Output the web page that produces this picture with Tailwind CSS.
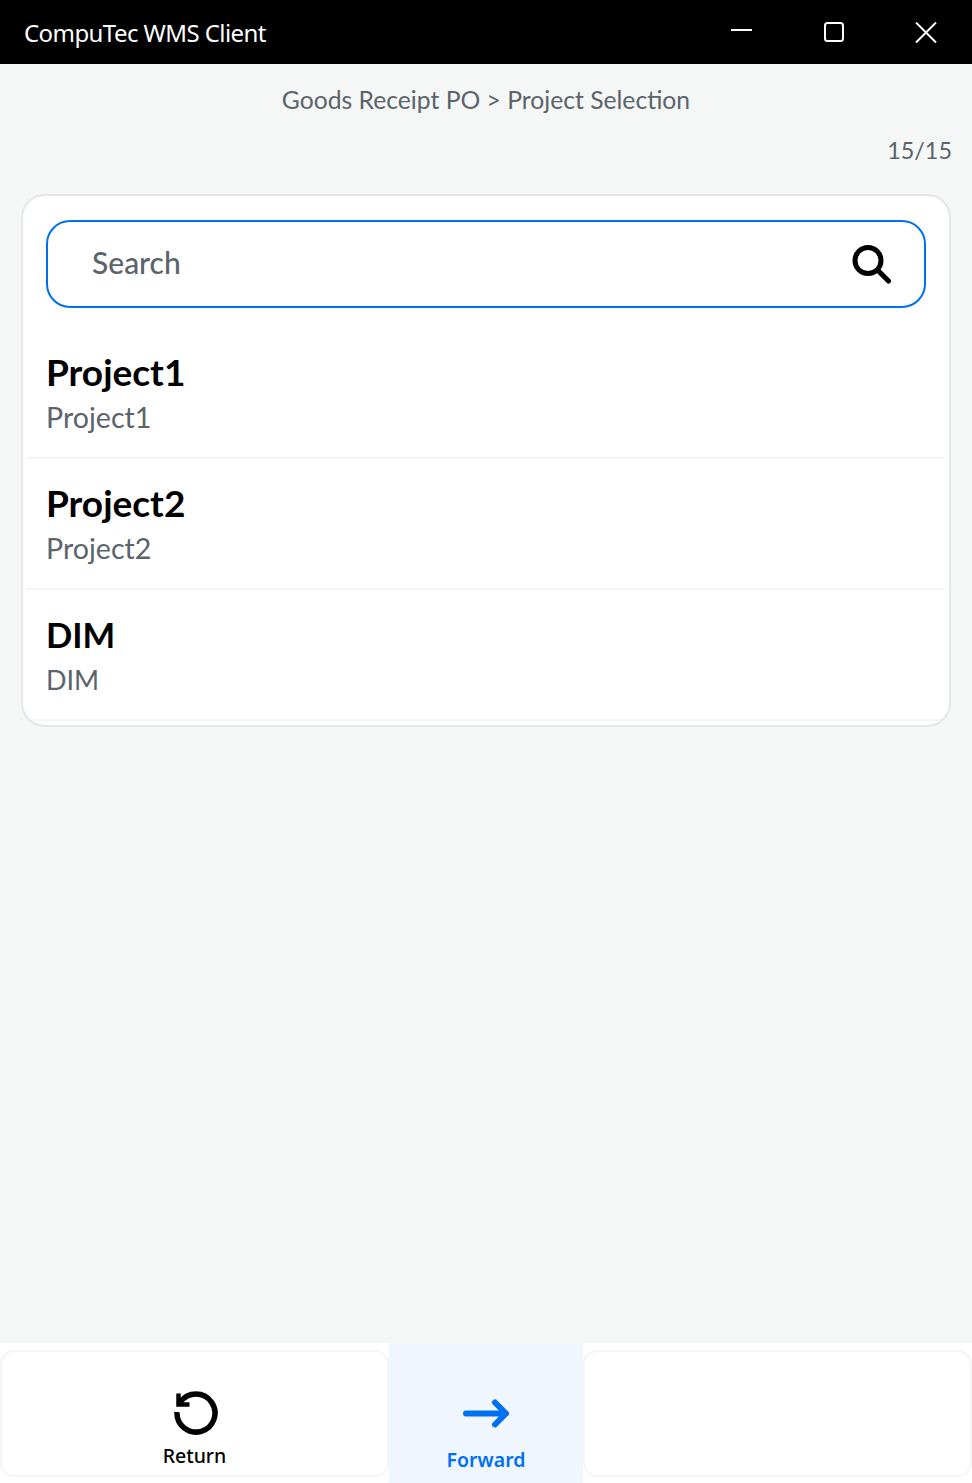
<!DOCTYPE html>
<html>
<head>
<meta charset="utf-8">
<script src="https://cdn.jsdelivr.net/npm/@tailwindcss/browser@4"></script>
</head>
<body class="m-0 bg-[#f5f7f7] font-['Lato','Noto_Sans',sans-serif]">
<div class="flex flex-col h-[1483px] w-[972px] overflow-hidden">
  <header class="h-16 shrink-0 bg-black text-white flex items-center pl-6">
    <span class="flex-1 text-[24px] leading-[68px] pt-[1px] font-['Noto_Sans',sans-serif] tracking-[-0.57px]">CompuTec WMS Client</span>
    <div class="w-[92px] h-16 flex items-center justify-center pb-[2px]"><svg width="22" height="22" viewBox="0 0 22 22"><path d="M0 10h21" stroke="#fff" stroke-width="2"/></svg></div>
    <div class="w-[92px] h-16 flex items-center justify-center pt-[2px]"><svg width="22" height="22" viewBox="0 0 22 22"><rect x="2" y="1" width="18" height="18" rx="2.5" fill="none" stroke="#fff" stroke-width="2"/></svg></div>
    <div class="w-[92px] h-16 flex items-center justify-center pt-[2px]"><svg width="22" height="22" viewBox="0 0 22 22"><path d="M1 0.5l20 20M21 0.5l-20 20" stroke="#fff" stroke-width="2"/></svg></div>
  </header>
  <main class="flex-1 flex flex-col px-[21px]">
    <div class="h-[72px] pt-[19px] text-center text-[24.700px] leading-[34px] text-[#5b636b]">Goods Receipt PO &gt; Project Selection</div>
    <div class="h-[58px] pt-[1px] text-right -mr-[1px] text-[23.400px] leading-[26px] text-[#5b636b]">15/15</div>
    <section class="h-[533px] bg-white border-2 border-[#e5e6e6] rounded-[24px] px-[3px] pt-[24px] overflow-hidden">
      <div class="mx-[20px] h-[88px] border-2 border-[#0070f2] rounded-[24px] flex items-center pl-[44px] pr-[32px]">
        <span class="flex-1 text-[30px] leading-[38px] pb-[5px] text-[#5b636b] font-medium">Search</span>
        <svg width="40" height="40" viewBox="0 0 40 40" fill="none" stroke="#000" stroke-width="5" stroke-linecap="round" class="-ml-[1px] mr-[1px]"><circle cx="17" cy="16.5" r="13"/><path d="M27 26.5l10.500 10.500"/></svg>
      </div>
      <div class="mt-[20px] h-[131px] border-b-2 border-[#f3f4f4] pl-[20px] pt-[22px]">
        <div class="text-[37px] leading-[44px] font-bold text-black">Project1</div>
        <div class="text-[28.600px] leading-[44px] pt-[1px] text-[#5b636b]">Project1</div>
      </div>
      <div class="h-[131px] border-b-2 border-[#f3f4f4] pl-[20px] pt-[22px]">
        <div class="text-[37px] leading-[44px] font-bold text-black">Project2</div>
        <div class="text-[28.600px] leading-[44px] pt-[1px] text-[#5b636b]">Project2</div>
      </div>
      <div class="h-[131px] border-b-2 border-[#f3f4f4] pl-[20px] pt-[23px]">
        <div class="text-[34.600px] leading-[44px] font-bold text-black">DIM</div>
        <div class="text-[27px] leading-[44px] pt-[1px] text-[#5b636b]">DIM</div>
      </div>
    </section>
  </main>
  <footer class="h-[140px] shrink-0 bg-white flex font-['Noto_Sans',sans-serif]">
    <div class="w-[389px] pt-[7px] pb-[6px]">
      <div class="h-full border-2 border-[#f4f5f5] rounded-[14px] flex flex-col items-center pt-[37px]">
        <svg width="46" height="46" viewBox="0 0 46 46" fill="none" stroke="#000" stroke-width="5.500" class="ml-[2px]"><path d="M7.500 13A19 19 0 1 1 4 23"/><path d="M5.500 4.500v11h11" stroke-width="4.500"/></svg>
        <span class="text-[19.500px] leading-[28px] mt-[7px] font-medium text-black">Return</span>
      </div>
    </div>
    <div class="w-[194px] bg-[#f0f6fd] flex flex-col items-center pt-[49px]">
      <svg width="50" height="44" viewBox="0 0 50 44" fill="none" stroke="#0070f2" stroke-width="6" stroke-linecap="round" stroke-linejoin="round" class="ml-[2px]"><path d="M4 21.500h40M33 10.500l11 11-11 11"/></svg>
      <span class="text-[19.500px] leading-[28px] mt-[10px] font-semibold text-[#0070f2]">Forward</span>
    </div>
    <div class="flex-1 pt-[7px] pb-[6px]">
      <div class="h-full border-2 border-[#f4f5f5] rounded-[14px]"></div>
    </div>
  </footer>
</div>
</body>
</html>
